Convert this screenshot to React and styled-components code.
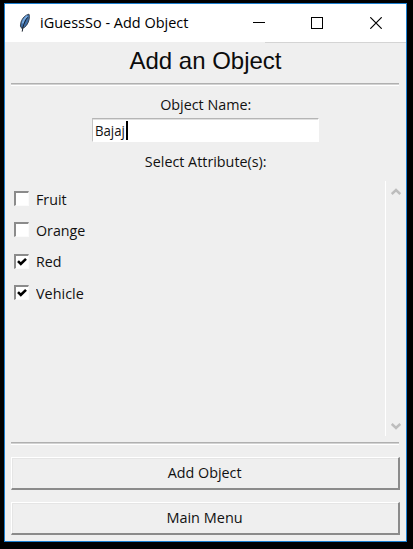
import React from 'react';
import styled, { createGlobalStyle } from 'styled-components';

const GlobalStyle = createGlobalStyle`
  * { box-sizing: border-box; }
  html, body { margin: 0; background: #000; overflow: hidden; }
  button { font: inherit; color: inherit; }
`;

const Desktop = styled.div`
  width: 413px;
  height: 549px;
  padding: 3px 6px 7px 4px;
  background: #000;
  font-family: "Open Sans", "Noto Sans", sans-serif;
  font-size: 15px;
  color: #111;
`;

const Window = styled.main`
  width: 403px;
  height: 539px;
  border: 1px solid #1b7fd0;
  background: #efefef;
  display: flex;
  flex-direction: column;
`;

const TitleBar = styled.header`
  height: 38px;
  flex: none;
  display: flex;
  align-items: center;
  background: #fff;
  padding-left: 13px;
`;

const Caption = styled.div`
  flex: 1;
  margin: -2px 0 0 8px;
  line-height: 20px;
  color: #000;
`;

const Label = styled.span`
  display: inline-block;
  white-space: nowrap;
  transform: scaleX(${(p) => p.$stretch || 1});
  transform-origin: ${(p) => p.$origin || 'center'};
`;

const WindowControls = styled.div`
  display: flex;
  gap: 46px;
  margin-right: 24px;
  height: 12px;
`;

const ControlIcon = styled.svg`
  width: ${(p) => p.$width || 12}px;
  height: 12px;
`;

const TitleEdge = styled.div`
  height: 1px;
  flex: none;
  margin-left: 260px;
  background: #d4d4d4;
`;

const Heading = styled.h1`
  margin: 3px 0 0;
  height: 37px;
  text-align: center;
  font: 400 24px/29px "Liberation Sans", Arial, sans-serif;
  color: #0c0c0c;
`;

const Separator = styled.div`
  flex: none;
  height: 3px;
  width: 388px;
  margin-left: 6px;
  border-top: 1px solid #b0b0b0;
  border-bottom: 1px solid #fff;
  background: #d2d2d2;
`;

const FieldLabel = styled.div`
  height: 20px;
  line-height: 20px;
  margin-top: ${(p) => p.$top}px;
  text-align: center;
`;

const Entry = styled.div`
  width: 227px;
  height: 24px;
  margin: 4px 0 0 87px;
  border: 1px solid #c4c4c4;
  border-right-color: #fff;
  border-bottom-color: #fff;
  border-top: 1px solid #b5b5b5;
  box-shadow: inset 0 1px #e0e0e0;
  background: #fff;
  display: flex;
  align-items: center;
  padding-left: 2px;
`;

const EntryText = styled.div`
  width: 31px;
  line-height: 20px;
`;

const Caret = styled.div`
  width: 2px;
  height: 19px;
  background: #000;
`;

const ScrollArea = styled.section`
  flex: none;
  display: flex;
  height: 255px;
  margin: 10px 0 6px;
`;

const AttributeList = styled.div`
  width: 380px;
  padding: 2px 0 0 9px;
  display: flex;
  flex-direction: column;
`;

const AttributeRow = styled.div`
  height: 31.3px;
  display: flex;
  align-items: center;
  gap: 7px;
  line-height: 20px;
`;

const CheckBox = styled.div`
  width: 15px;
  height: 15px;
  flex: none;
  border: 2px solid #8b8b8b;
  border-right: 1px solid #fbfbfb;
  border-bottom: 1px solid #fbfbfb;
  background: #fff;
  display: flex;
  align-items: center;
  justify-content: center;
`;

const ScrollBar = styled.div`
  width: 16px;
  border-left: 1px solid #fff;
  display: flex;
  flex-direction: column;
  justify-content: space-between;
  padding: 6px 0 5px 5px;
`;

const ButtonStack = styled.footer`
  display: flex;
  flex-direction: column;
  gap: 12px;
  padding: 12px 0 0 6px;
`;

const PushButton = styled.button`
  width: 389px;
  height: 33px;
  padding: 0 0 2px;
  background: #efefef;
  border: 1px solid #fff;
  border-right: 2px solid #8b8b8b;
  border-bottom: 2px solid #8b8b8b;
  box-shadow: inset 1px 1px #e5e5e5;
  line-height: 20px;
`;

const attributes = [
  { name: 'Fruit', checked: false, stretch: 0.95 },
  { name: 'Orange', checked: false, stretch: 0.95 },
  { name: 'Red', checked: true, stretch: 0.95 },
  { name: 'Vehicle', checked: true, stretch: 0.96 },
];

function Feather() {
  return (
    <svg width="14" height="20" viewBox="0 0 14 20">
      <path d="M11 1.2C7.5 1.8 4.2 5.2 3 9.2L2.4 13l1.4 2.4 2.4-.8C9.2 12.4 11.4 8 11.4 3.4Z" fill="#3f6fa8" stroke="#38424e" strokeWidth="1" />
      <path d="M9.4 3C7 4.6 5.4 7.2 4.6 10.5" fill="none" stroke="#78aade" strokeWidth="1.8" />
      <path d="M9.6 4.4C7.5 7.2 5.8 10.7 5 14l-.8 4.6" fill="none" stroke="#17202b" strokeWidth="1" />
    </svg>
  );
}

function Arrow({ down }) {
  return (
    <svg width="10" height="9" viewBox="0 0 10 9">
      <path d={down ? 'M.7 2l4.3 4 4.3-4' : 'M.7 7l4.3-4 4.3 4'} fill="none" stroke="#bdbdbd" strokeWidth="2.6" />
    </svg>
  );
}

export default function App() {
  return (
    <Desktop>
      <GlobalStyle />
      <Window>
        <TitleBar>
          <Feather />
          <Caption><Label $stretch={0.965} $origin="left">iGuessSo - Add Object</Label></Caption>
          <WindowControls>
            <ControlIcon shapeRendering="crispEdges"><path d="M0 5.5h12" stroke="#000" /></ControlIcon>
            <ControlIcon $width={13} shapeRendering="crispEdges"><path d="M.5.5h11v11H.5z" fill="none" stroke="#000" /></ControlIcon>
            <ControlIcon><path d="M.3.3l11.4 11.4M11.7.3L.3 11.7" stroke="#000" strokeWidth="1.2" /></ControlIcon>
          </WindowControls>
        </TitleBar>
        <TitleEdge />
        <Heading><Label>Add an Object</Label></Heading>
        <Separator />
        <FieldLabel $top={8}><Label $stretch={0.955}>Object Name:</Label></FieldLabel>
        <Entry>
          <EntryText><Label $stretch={0.88} $origin="left">Bajaj</Label></EntryText>
          <Caret />
        </Entry>
        <FieldLabel $top={9}><Label $stretch={0.955}>Select Attribute(s):</Label></FieldLabel>
        <ScrollArea>
          <AttributeList>
            {attributes.map((a) => (
              <AttributeRow key={a.name}>
                <CheckBox>
                  {a.checked && (
                    <svg width="10" height="10" viewBox="0 0 10 10">
                      <path d="M1 4.2l2.8 2.8L9 1.8" fill="none" stroke="#000" strokeWidth="2.6" />
                    </svg>
                  )}
                </CheckBox>
                <Label $stretch={a.stretch} $origin="left">{a.name}</Label>
              </AttributeRow>
            ))}
          </AttributeList>
          <ScrollBar>
            <Arrow />
            <Arrow down />
          </ScrollBar>
        </ScrollArea>
        <Separator />
        <ButtonStack>
          <PushButton><Label $stretch={0.955}>Add Object</Label></PushButton>
          <PushButton><Label $stretch={0.965}>Main Menu</Label></PushButton>
        </ButtonStack>
      </Window>
    </Desktop>
  );
}
